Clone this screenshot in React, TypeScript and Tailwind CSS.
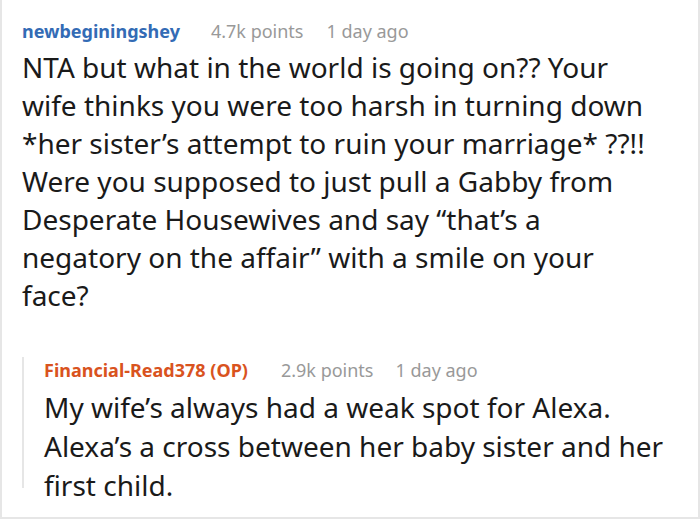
export default function App() {
  const font = { fontFamily: '"Noto Sans", "Open Sans", sans-serif' };
  return (
    <div className="w-[700px] h-[520px] bg-white overflow-hidden" style={font}>
      <div className="w-[700px] h-[519px] border-l-2 border-r-2 border-b-2 border-[#e6e6e6] pl-[20px] pr-[10px] pt-[18px]">
        <div className="flex items-baseline text-[18px] leading-[26px] whitespace-nowrap">
          <span className="font-bold text-[#336bb5]">newbeginingshey</span>
          <span className="ml-[31px] text-[#999999]">4.7k points</span>
          <span className="ml-[23px] text-[#999999]">1 day ago</span>
        </div>
        <p className="mt-[4px] text-[28px] leading-[38px] text-[#1a1a1a] whitespace-nowrap">
          NTA but what in the world is going on?? Your<br />
          wife thinks you were too harsh in turning down<br />
          *her sister’s attempt to ruin your marriage* ??!!<br />
          Were you supposed to just pull a Gabby from<br />
          Desperate Housewives and say “that’s a<br />
          negatory on the affair” with a smile on your<br />
          face?
        </p>
        <div className="mt-[55px] border-l-2 border-[#e6e6e6] pl-[20px] h-[131px]">
          <div className="flex items-baseline text-[18px] leading-[26px] -mt-[12px] whitespace-nowrap">
            <span className="font-bold text-[#d9531e]">Financial-Read378 (OP)</span>
            <span className="ml-[33px] text-[#999999]">2.9k points</span>
            <span className="ml-[22px] text-[#999999]">1 day ago</span>
          </div>
          <p className="mt-[5px] text-[28px] leading-[39px] text-[#1a1a1a] whitespace-nowrap">
            My wife’s always had a weak spot for Alexa.<br />
            Alexa’s a cross between her baby sister and her<br />
            first child.
          </p>
        </div>
      </div>
    </div>
  );
}
